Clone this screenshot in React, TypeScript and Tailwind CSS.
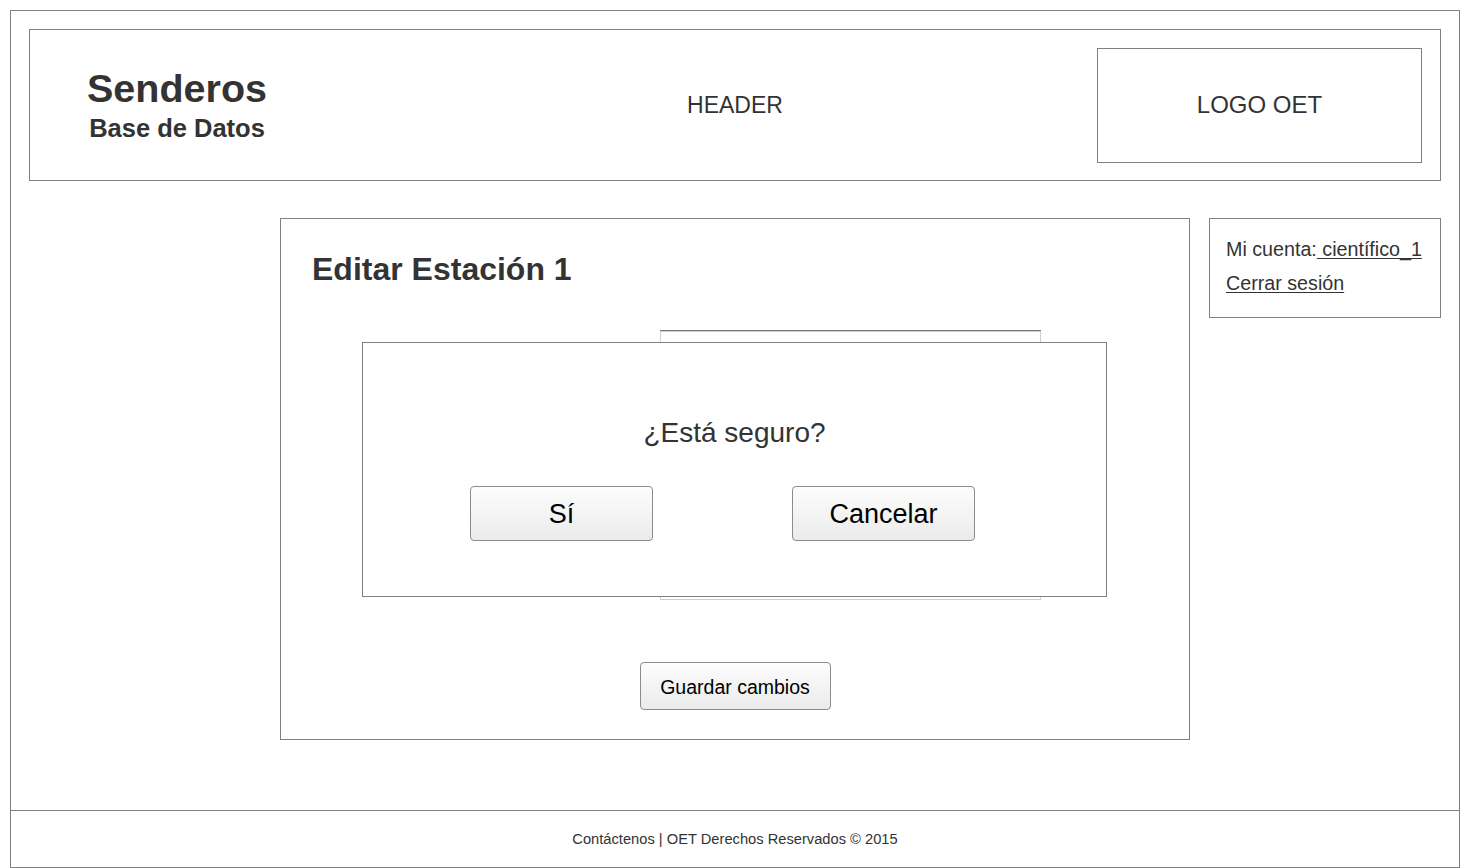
// Wireframe: "Editar Estación 1" page with a confirm dialog on top
const Button = ({ label, className }: { label: string; className: string }) => {
  return (
    <button
      type="button"
      className={
        "flex items-center justify-center rounded-[4px] border border-[#8c8c8c] bg-gradient-to-b from-[#fdfdfd] to-[#ebebeb] text-black leading-none " +
        className
      }
    >
      {label}
    </button>
  );
};

const App = () => {
  return (
    <div className="ml-[10px] mt-[10px] flex h-[858px] w-[1450px] flex-col border border-[#808080] bg-white font-['Liberation_Sans',Arial,sans-serif] text-[#333333]">
      {/* Header */}
      <div className="px-[18px] pt-[18px]">
        <header className="grid h-[152px] grid-cols-3 items-center border border-[#808080]">
          <div className="pl-[57px]">
            <div className="inline-flex flex-col items-center gap-[8px] font-bold leading-none">
              <span className="text-[39.5px]">Senderos</span>
              <span className="text-[25.5px]">Base de Datos</span>
            </div>
          </div>
          <div className="text-center text-[23px] leading-none">HEADER</div>
          <div className="flex justify-end pr-[18px]">
            <div className="flex h-[115px] w-[325px] items-center justify-center border border-[#808080] text-[24px] leading-none">
              LOGO OET
            </div>
          </div>
        </header>
      </div>

      {/* Content */}
      <main className="flex flex-1 items-start justify-end gap-[19px] pr-[18px] pt-[37px]">
        <section className="relative h-[522px] w-[910px] border border-[#808080]">
          <h1 className="pl-[31px] pt-[34px] text-[32px] font-bold leading-none">Editar Estación 1</h1>

          {/* list box behind the dialog */}
          <div className="ml-[379px] mt-[45px] h-[270px] w-[381px] border-t border-[#777777]">
            <div className="h-full w-full border border-[#cfcfcf]"></div>
          </div>

          <div className="mt-[62px] flex justify-center">
            <Button label="Guardar cambios" className="h-[48px] w-[191px] pt-[3px] text-[19.5px]" />
          </div>

          {/* Confirm dialog */}
          <div className="absolute left-[81px] top-[123px] h-[255px] w-[745px] border border-[#808080] bg-white">
            <p className="pt-[76px] text-center text-[28px] leading-none">¿Está seguro?</p>
            <div className="mt-[39px] flex gap-[139px] pl-[107px]">
              <Button label="Sí" className="h-[55px] w-[183px] pt-[2px] text-[27px]" />
              <Button label="Cancelar" className="h-[55px] w-[183px] pt-[2px] text-[27px]" />
            </div>
          </div>
        </section>

        {/* Account box */}
        <aside className="flex h-[100px] w-[232px] flex-col gap-[14px] border border-[#808080] pl-[16px] pt-[21px] text-[19.7px] leading-none">
          <div className="whitespace-pre">
            Mi cuenta:<span className="underline underline-offset-2"> científico_1</span>
          </div>
          <div>
            <span className="underline underline-offset-2">Cerrar sesión</span>
          </div>
        </aside>
      </main>

      {/* Footer */}
      <footer className="flex h-[57px] items-center justify-center border-t border-[#808080] text-[14.7px] leading-none">
        Contáctenos | OET Derechos Reservados © 2015
      </footer>
    </div>
  );
};

export default App;
